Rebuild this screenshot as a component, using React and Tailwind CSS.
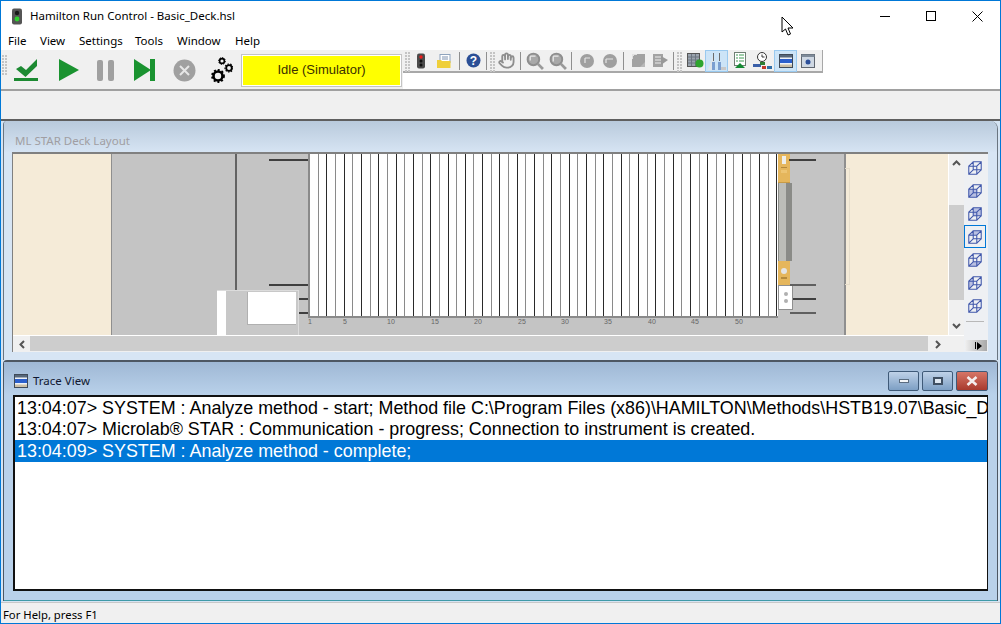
import React from "react";
import { Hand } from "lucide-react";

const MENU = [["File", "w-[32px]"], ["View", "w-[39px]"], ["Settings", "w-[56px]"], ["Tools", "w-[42px]"], ["Window", "w-[58px]"], ["Help", "w-[40px]"]];
const NUMBERS = [[1, 295], [5, 330], [10, 374], [15, 418], [20, 461], [25, 505], [30, 548], [35, 591], [40, 635], [45, 678], [50, 722]];
const CUBE_FACES = ["", "M2 8h9v9H2z", "M7 3h9v9H7z", "M2 8L7 3h9L11 8z", "M2 17l5-5h9l-5 5z", "M2 8L7 3v9L2 17z", ""];

function Grip({ className = "" }) {
  return (
    <div className={`grid grid-cols-2 gap-x-[1px] gap-y-[1px] content-start w-[5px] shrink-0 ${className}`}>
      {Array.from({ length: 14 }).map((_, i) => (
        <span key={i} className="w-[2px] h-[2px] bg-[#c4c4c4]" />
      ))}
    </div>
  );
}

function Sep({ className = "" }) {
  return <div className={`w-[1px] h-[18px] bg-[#8f8f8f] shrink-0 ${className}`} />;
}

function Slot({ w, active, children }) {
  return (
    <div className={`flex items-center justify-center h-[22px] shrink-0 ${w} ${active ? "bg-[#cce4f7] border border-[#99c9ef]" : ""}`}>
      {children}
    </div>
  );
}

function Gears() {
  return (
    <svg width="24" height="26" viewBox="0 0 24 26">
      <circle cx="9" cy="19" r="4.5" fill="none" stroke="#000" strokeWidth="2.6" />
      <circle cx="9" cy="19" r="6" fill="none" stroke="#000" strokeWidth="1.8" strokeDasharray="2 1.9" />
      <circle cx="20" cy="11" r="2.8" fill="none" stroke="#000" strokeWidth="1.8" />
      <circle cx="20" cy="11" r="4" fill="none" stroke="#000" strokeWidth="1.2" strokeDasharray="1.5 1.3" />
      <circle cx="13" cy="4" r="2.4" fill="none" stroke="#000" strokeWidth="1.6" />
      <circle cx="13" cy="4" r="3.4" fill="none" stroke="#000" strokeWidth="1" strokeDasharray="1.4 1.2" />
    </svg>
  );
}

function GrayMag({ flip }) {
  return (
    <svg width="18" height="18" viewBox="0 0 17 17">
      <circle cx="7" cy="7" r="5.5" fill="#a8a8a8" stroke="#8e8e8e" strokeWidth="1.8" />
      <path d="M11 11l5 5" stroke="#9a9a9a" strokeWidth="2.6" />
      <path d={flip ? "M4 4h5M4 4v5" : "M4 4h5M4 4v4"} stroke="#e8e8e8" strokeWidth="1.2" fill="none" />
    </svg>
  );
}

function GrayDisc({ flip }) {
  return (
    <svg width="14" height="14" viewBox="0 0 14 14">
      <circle cx="7" cy="7" r="7" fill="#9f9f9f" />
      <path d={flip ? "M3 5h7M3 5v4" : "M5 4h5M5 4v5"} stroke="#e6e6e6" strokeWidth="1.2" fill="none" />
    </svg>
  );
}

function Cube({ face }) {
  return (
    <svg width="16" height="18" viewBox="0 0 18 20" fill="none" stroke="#4057ab" strokeWidth="1.2">
      {face && <path d={face} fill="#b9c0e2" stroke="none" />}
      <path d="M2 8h9v9H2zM7 3h9v9H7zM2 8l5-5M11 8l5-5M2 17l5-5M11 17l5-5" />
    </svg>
  );
}

function TraceIcon() {
  return (
    <svg width="14" height="14" viewBox="0 0 14 14">
      <rect x="0.5" y="0.5" width="13" height="13" fill="#eef2f6" stroke="#3f4a58" />
      <rect x="1" y="1" width="12" height="2.5" fill="#56677a" />
      <rect x="1" y="5" width="12" height="4" fill="#2b5fcb" />
      <rect x="1" y="10.5" width="12" height="2.5" fill="#cbbfa6" />
    </svg>
  );
}

function ToolIcon({ kind }) {
  if (kind === "traffic")
    return (
      <svg width="10" height="16" viewBox="0 0 10 16">
        <rect x="1" y="0.5" width="8" height="15" rx="2" fill="#4b4b4b" />
        <circle cx="5" cy="4" r="1.7" fill="#ef1c1c" />
        <circle cx="5" cy="8" r="1.5" fill="#111" />
        <circle cx="5" cy="12" r="1.5" fill="#111" />
      </svg>
    );
  if (kind === "note")
    return (
      <svg width="14" height="14" viewBox="0 0 14 14">
        <rect x="3" y="0.5" width="10" height="8" fill="#fff" stroke="#8fa4bd" />
        <path d="M5 3h6M5 5h6" stroke="#7e93b0" />
        <path d="M0 6h4l1 1h8.5v7H0z" fill="#efcf3a" />
      </svg>
    );
  if (kind === "help")
    return (
      <svg width="15" height="15" viewBox="0 0 15 15">
        <circle cx="7.5" cy="7.5" r="7" fill="#2b4f96" />
        <text x="7.5" y="12" textAnchor="middle" fontSize="12" fontWeight="700" fill="#fff" fontFamily="Liberation Sans, sans-serif">?</text>
      </svg>
    );
  if (kind === "chip")
    return (
      <svg width="15" height="15" viewBox="0 0 15 15">
        <rect x="1" y="1" width="13" height="13" fill="#a2a2a2" />
        <path d="M1 1h5v1H3v1H2v3H1z" fill="#e0e0e0" />
        <path d="M9 14l5-5v5z" fill="#b8b8b8" />
      </svg>
    );
  if (kind === "sheet")
    return (
      <svg width="17" height="15" viewBox="0 0 17 15">
        <rect x="1" y="1" width="10" height="13" fill="#a2a2a2" />
        <path d="M3 4h6M3 7h6M3 10h6" stroke="#ececec" />
        <path d="M9 3l7 4-7 5z" fill="#999" />
      </svg>
    );
  if (kind === "grid")
    return (
      <svg width="17" height="15" viewBox="0 0 17 15">
        <rect x="0.5" y="0.5" width="12" height="13" fill="#9aa3ad" stroke="#555" />
        <path d="M1 4h11M1 7h11M1 10h11M4.5 1v12M8.5 1v12" stroke="#6b7480" />
        <circle cx="12.5" cy="10.5" r="4" fill="#2ea52e" />
      </svg>
    );
  if (kind === "tubes")
    return (
      <svg width="18" height="20" viewBox="0 0 18 20">
        <path d="M0 19L6 2v17z" fill="#dfe5ea" />
        <path d="M5 2h1v8H5zM11 2h1v8h-1z" fill="#6b6b6b" />
        <rect x="4" y="11" width="3" height="8" fill="#7b9fd0" />
        <rect x="10" y="11" width="3" height="8" fill="#7b9fd0" />
        <rect x="13" y="16" width="5" height="3" fill="#c8c8c8" />
      </svg>
    );
  if (kind === "list")
    return (
      <svg width="14" height="17" viewBox="0 0 14 17">
        <rect x="1.5" y="0.5" width="11" height="13" fill="#fff" stroke="#6f7f73" />
        <path d="M3 3h2M6 3h5M3 6h2M6 6h5M3 9h2M6 9h5" stroke="#3e9b54" />
        <path d="M7 11l5 5H2z" fill="#148a32" />
      </svg>
    );
  if (kind === "clock")
    return (
      <svg width="19" height="18" viewBox="0 0 19 18">
        <circle cx="9" cy="5" r="4.5" fill="#fff" stroke="#333" />
        <path d="M9 2.5V5h2.5" stroke="#333" fill="none" />
        <rect x="0" y="12" width="8" height="3" fill="#3a5fa8" />
        <rect x="7" y="10" width="5" height="3" fill="#2e7d32" />
        <rect x="9" y="14" width="4" height="3" fill="#c0392b" />
        <rect x="14" y="14" width="5" height="3" fill="#2f6fa8" />
      </svg>
    );
  if (kind === "bars") return <TraceIcon />;
  return (
    <svg width="14" height="14" viewBox="0 0 14 14">
      <rect x="0.5" y="0.5" width="13" height="13" fill="#cfd8e3" stroke="#5f6670" />
      <rect x="0.5" y="0.5" width="13" height="2.5" fill="#7f8b99" />
      <circle cx="7" cy="8" r="2.5" fill="#2c4f9a" />
    </svg>
  );
}

function WinButton({ red, children }) {
  return (
    <div
      className={`flex items-center justify-center h-[20px] rounded-[2px] border border-[#3f5a78] ${
        red ? "w-[32px] bg-linear-to-b from-[#d67566] to-[#a83a2e]" : "w-[31px] bg-linear-to-b from-[#bfd2e8] to-[#7d9fc4]"
      }`}
    >
      {children}
    </div>
  );
}

export default function App() {
  return (
    <div className="w-[1001px] h-[624px] overflow-hidden border border-[#0078d7] bg-white flex flex-col relative font-['Noto_Sans',sans-serif] text-[12px] text-black">
      {/* Title bar */}
      <div className="h-[30px] flex items-center shrink-0">
        <svg className="ml-[10px]" width="12" height="17" viewBox="0 0 12 17">
          <rect x="1" y="0.5" width="10" height="16" rx="2" fill="#555" />
          <circle cx="6" cy="5" r="2.2" fill="#1a1a1a" />
          <circle cx="6" cy="11" r="2.4" fill="#2fd12f" />
        </svg>
        <span className="ml-[7px] text-[11.5px] leading-none">Hamilton Run Control - Basic_Deck.hsl</span>
        <div className="ml-auto flex items-center">
          <div className="w-[46px] flex justify-center"><div className="w-[10px] h-[1px] bg-black" /></div>
          <div className="w-[46px] flex justify-center"><div className="w-[10px] h-[10px] border border-black" /></div>
          <div className="w-[46px] flex justify-center">
            <svg width="11" height="11" viewBox="0 0 11 11"><path d="M.5.5l10 10M10.5.5l-10 10" stroke="#000" /></svg>
          </div>
        </div>
      </div>

      {/* Menu */}
      <div className="h-[19px] flex items-center pl-[7px] shrink-0">
        {MENU.map(([label, w]) => (
          <span key={label} className={`${w} text-[11.5px] leading-none`}>{label}</span>
        ))}
      </div>

      {/* Toolbars */}
      <div className="h-[41px] flex shrink-0 border-b-2 border-[#a0a0a0]">
        <div className="w-[402px] bg-[#f0f0f0] flex items-center pl-[1px] pt-[1px]">
          <Grip className="h-[31px]" />
          <Slot w="ml-[5px] w-[28px]">
            <svg width="26" height="24" viewBox="0 0 26 24">
              <path d="M3 11l5-3 5 4L24 1v7L12.500 19z" fill="#1c8a32" />
              <rect x="1" y="20" width="24" height="3" fill="#1c8a32" />
            </svg>
          </Slot>
          <Slot w="ml-[19px] w-[20px]">
            <svg width="20" height="22" viewBox="0 0 20 22"><path d="M0 0l20 11L0 22z" fill="#1a9330" /></svg>
          </Slot>
          <Slot w="ml-[16px] w-[20px]">
            <div className="flex gap-[5px]">
              <div className="w-[6px] h-[21px] rounded-[2px] bg-[#a0a0a0]" />
              <div className="w-[6px] h-[21px] rounded-[2px] bg-[#a0a0a0]" />
            </div>
          </Slot>
          <Slot w="ml-[19px] w-[22px]">
            <svg width="22" height="22" viewBox="0 0 22 22"><path d="M0 0l17 11L0 22z" fill="#1a9330" /><rect x="16" y="0" width="5" height="22" fill="#1a9330" /></svg>
          </Slot>
          <Slot w="ml-[16px] w-[24px]">
            <svg width="23" height="23" viewBox="0 0 23 23">
              <circle cx="11.5" cy="11.5" r="11" fill="#a0a0a0" />
              <path d="M7 7l9 9M16 7l-9 9" stroke="#e6e6e6" strokeWidth="2" />
            </svg>
          </Slot>
          <Slot w="ml-[13px] w-[24px]"><Gears /></Slot>
          <div className="ml-[8px] w-[161px] h-[33px] shrink-0 border border-[#c4c4c4] bg-white p-[1px]">
            <div className="w-full h-full bg-[#ffff00] flex items-center justify-center font-['Liberation_Sans',sans-serif] text-[13px] text-[#3a3000]">
              Idle (Simulator)
            </div>
          </div>
        </div>

        <div className="h-[23px] w-[420px] bg-[#f0f0f0] border-b-2 border-r border-[#a8a8a8] flex items-center pl-[2px]">
          <Grip className="h-[18px]" />
          <Slot w="w-[22px]"><ToolIcon kind="traffic" /></Slot>
          <Slot w="ml-[1px] w-[22px]"><ToolIcon kind="note" /></Slot>
          <Sep className="ml-[4px]" />
          <Slot w="ml-[2px] w-[22px]"><ToolIcon kind="help" /></Slot>
          <Sep className="ml-[2px]" />
          <Grip className="ml-[3px] h-[18px]" />
          <Slot w="w-[22px]"><Hand size={17} color="#8e8e8e" strokeWidth={2.6} /></Slot>
          <Sep className="ml-[3px]" />
          <Slot w="ml-[2px] w-[23px]"><GrayMag /></Slot>
          <Slot w="w-[23px]"><GrayMag flip /></Slot>
          <Sep className="ml-[2px]" />
          <Slot w="ml-[3px] w-[23px]"><GrayDisc /></Slot>
          <Slot w="w-[23px]"><GrayDisc flip /></Slot>
          <Sep className="ml-[2px]" />
          <Slot w="ml-[3px] w-[22px]"><ToolIcon kind="chip" /></Slot>
          <Slot w="w-[22px]"><ToolIcon kind="sheet" /></Slot>
          <Sep className="ml-[2px]" />
          <Grip className="ml-[3px] h-[18px]" />
          <Slot w="ml-[4px] w-[19px]"><ToolIcon kind="grid" /></Slot>
          <Slot w="w-[23px]" active><ToolIcon kind="tubes" /></Slot>
          <Slot w="w-[23px]"><ToolIcon kind="list" /></Slot>
          <Slot w="w-[23px]"><ToolIcon kind="clock" /></Slot>
          <Slot w="w-[23px]" active><ToolIcon kind="bars" /></Slot>
          <Slot w="w-[22px]"><ToolIcon kind="eye" /></Slot>
        </div>
      </div>

      <div className="h-[28px] bg-[#f0f0f0] shrink-0 border-b-2 border-[#5f5f5f] box-content" />

      {/* MDI area */}
      <div className="flex-1 bg-[#d5e4f3] flex flex-col px-[2px] min-h-0">
        {/* Deck layout child */}
        <div className="h-[239px] shrink-0 border-x border-[#6a7580] rounded-tl-[4px] rounded-tr-[8px] flex flex-col bg-[#d7e5f4]">
          <div className="h-[31px] shrink-0 bg-linear-to-b from-[#b9cadc] to-[#d6e4f3] rounded-tl-[4px] rounded-tr-[8px] pl-[11px] flex items-center">
            <span className="text-[#a09ea2] text-[11.500px] leading-none pt-[8px]">ML STAR Deck Layout</span>
          </div>
          <div className="ml-[8px] mr-[9px] h-[200px] shrink-0 border-t-2 border-l border-[#808080] flex">
            <div className="w-[951px] shrink-0 flex flex-col">
              <div className="h-[181px] flex shrink-0">
                <div className="relative w-[935px] flex bg-[#c4c4c4] overflow-hidden">
                  <div className="w-[98px] bg-[#f5ebd8] border-r border-[#8f8f8f] box-content" />
                  <div className="flex-1" />
                  <div className="w-[104px] bg-[#f5ebd8] border-l-2 border-[#8f8f8f]" />

                  {/* Deck items */}
                  <div className="absolute left-[222px] top-0 w-[2px] h-[137px] bg-[#636363]" />
                  <div className="absolute left-[256px] top-[5px] w-[39px] h-[2px] bg-[#3f3f3f]" />
                  <div className="absolute left-[256px] top-[130px] w-[39px] h-[2px] bg-[#3f3f3f]" />
                  <div className="absolute left-[285px] top-[144px] w-[10px] h-[2px] bg-[#3f3f3f]" />
                  <div className="absolute left-[285px] top-[158px] w-[10px] h-[2px] bg-[#3f3f3f]" />

                  <div className="absolute left-[204px] top-[136px] w-[82px] h-[45px] flex border-t border-r border-[#dcdcdc]">
                    <div className="w-[9px] bg-white" />
                    <div className="flex-1 bg-[#c8c8c8] relative">
                      <div className="absolute left-[21px] top-[1px] w-[49px] h-[33px] bg-white border-l border-b border-[#b0b0b0]" />
                    </div>
                  </div>

                  <div className="absolute left-[295px] top-0 h-[164px] w-[470px] flex border-l-2 border-b-2 border-[#8a8a8a] bg-white">
                    {Array.from({ length: 54 }).map((_, i) => (
                      <div key={i} className={`w-[8.66px] h-full shrink-0 border-r ${i % 2 === 0 ? "border-[#8a8a8a]" : "border-[#2a2a2a]"}`} />
                    ))}
                  </div>
                  {NUMBERS.map(([n, x]) => (
                    <span key={n} className="absolute top-[164px] text-[7px] leading-none text-[#666] font-['Liberation_Sans',sans-serif]" style={{ left: x }}>
                      {n}
                    </span>
                  ))}

                  <div className="absolute left-[765px] top-0 w-[12px] h-[29px] bg-[#e5b65c] border-b border-[#c89b45] flex flex-col items-center">
                    <div className="mt-[2px] w-[4px] h-[8px] bg-[#eeeeea]" />
                    <div className="mt-[3px] w-[6px] h-[1px] bg-[#b58a3c]" />
                    <div className="mt-[2px] w-[6px] h-[3px] bg-[#edc473]" />
                  </div>
                  <div className="absolute left-[765px] top-[29px] w-[14px] h-[78px] flex">
                    <div className="w-[8px] bg-[#bcbdb8] border-l border-[#8a8b87]" />
                    <div className="w-[6px] bg-[#8a8b87]" />
                  </div>
                  <div className="absolute left-[765px] top-[107px] w-[12px] h-[24px] bg-[#e5b65c] flex flex-col items-center pt-[7px]">
                    <div className="w-[6px] h-[6px] rounded-full bg-[#e4e4e4]" />
                    <div className="mt-[3px] w-[6px] h-[2px] bg-[#b58a3c]" />
                  </div>
                  <div className="absolute left-[765px] top-[131px] w-[15px] h-[25px] bg-white border border-[#8f8f8f] flex flex-col items-center justify-center gap-[3px]">
                    <div className="w-[4px] h-[4px] rounded-full bg-[#b0b0b0]" />
                    <div className="w-[4px] h-[4px] rounded-full bg-[#b0b0b0]" />
                  </div>
                  <div className="absolute left-[776px] top-[5px] w-[27px] h-[2px] bg-[#3f3f3f]" />
                  <div className="absolute left-[777px] top-[130px] w-[26px] h-[2px] bg-[#5f5f5f]" />
                  <div className="absolute left-[780px] top-[144px] w-[23px] h-[2px] bg-[#3f3f3f]" />
                  <div className="absolute left-[777px] top-[158px] w-[26px] h-[2px] bg-[#5f5f5f]" />
                  <div className="absolute left-[832px] top-[14px] w-[5px] h-[117px] border border-l-0 border-[#e6ddcb]" />
                </div>

                {/* Vertical scrollbar */}
                <div className="w-[16px] bg-[#f0f0f0] flex flex-col items-center border-l border-white">
                  <svg className="mt-[6px]" width="9" height="6" viewBox="0 0 9 6"><path d="M1 5l3.5-3.5L8 5" fill="none" stroke="#555" strokeWidth="2" /></svg>
                  <div className="mt-[39px] w-full h-[95px] bg-[#cdcdcd]" />
                  <svg className="mt-[23px]" width="9" height="6" viewBox="0 0 9 6"><path d="M1 1l3.5 3.5L8 1" fill="none" stroke="#555" strokeWidth="2" /></svg>
                </div>
              </div>

              {/* Horizontal scrollbar */}
              <div className="h-[17px] shrink-0 border-t border-white flex items-stretch bg-[#f0f0f0]">
                <div className="w-[17px] flex items-center justify-center">
                  <svg width="6" height="9" viewBox="0 0 6 9"><path d="M5 1L1.500 4.500 5 8" fill="none" stroke="#555" strokeWidth="2" /></svg>
                </div>
                <div className="w-[898px] h-[15px] bg-[#cdcdcd]" />
                <div className="w-[20px] flex items-center justify-center">
                  <svg width="6" height="9" viewBox="0 0 6 9"><path d="M1 1l3.500 3.500L1 8" fill="none" stroke="#555" strokeWidth="2" /></svg>
                </div>
              </div>
            </div>

            {/* View toolbar */}
            <div className="flex-1 bg-[#eef0f3] flex flex-col items-start pt-[2px]">
              {CUBE_FACES.map((face, i) => (
                <div key={i} className={`w-[22px] h-[23px] shrink-0 flex items-center justify-center ${i === 3 ? "border border-[#0078d7]" : ""}`}>
                  <Cube face={face} />
                </div>
              ))}
              <div className="mt-[4px] ml-[2px] w-[18px] h-[1px] bg-[#b8b8b8]" />
              <div className="mt-[18px] ml-[1px] w-[22px] h-[11px] bg-linear-to-r from-[#f0f0f0] to-[#a8a8a8] flex items-center justify-end pr-[5px]">
                <div className="w-[1px] h-[7px] bg-black mr-[1px]" />
                <div className="w-0 h-0 border-y-[4px] border-y-transparent border-l-[5px] border-l-black" />
              </div>
            </div>
          </div>
          <div className="flex-1" />
        </div>

        {/* Trace view child */}
        <div className="h-[241px] shrink-0 border-x border-t-2 border-[#4d5763] rounded-tl-[4px] rounded-tr-[4px] flex flex-col bg-[#b9d1ea]">
          <div className="h-[33px] shrink-0 bg-linear-to-b from-[#9fb8d5] to-[#b9d1ea] flex items-center pl-[10px] pr-[9px] pt-[4px]">
            <TraceIcon />
            <span className="ml-[5px] text-[11.500px] leading-none text-[#101830]">Trace View</span>
            <div className="ml-auto flex gap-[3px]">
              <WinButton><div className="w-[10px] h-[4px] bg-[#f2f5f8] border border-[#5a6c80]" /></WinButton>
              <WinButton><div className="w-[10px] h-[8px] border-2 border-[#3f4f62] bg-[#dfe8f2]" /></WinButton>
              <WinButton red>
                <svg width="12" height="10" viewBox="0 0 12 10"><path d="M1.500 1l9 8M10.500 1l-9 8" stroke="#f4eeee" strokeWidth="2.600" /></svg>
              </WinButton>
            </div>
          </div>
          <div className="ml-[9px] mr-[9px] h-[196px] shrink-0 bg-white border-t-2 border-l-2 border-b-2 border-r border-[#111] font-['Liberation_Sans',sans-serif] text-[17.900px] overflow-hidden">
            <div className="h-[22px] leading-[22px] pl-[2px] whitespace-nowrap">13:04:07&gt; SYSTEM : Analyze method - start; Method file C:\Program Files (x86)\HAMILTON\Methods\HSTB19.07\Basic_Deck.hsl</div>
            <div className="h-[21px] leading-[21px] pl-[2px] whitespace-nowrap">13:04:07&gt; Microlab® STAR : Communication - progress; Connection to instrument is created.</div>
            <div className="h-[22px] leading-[22px] pl-[2px] whitespace-nowrap bg-[#0078d7] text-white">13:04:09&gt; SYSTEM : Analyze method - complete;</div>
          </div>
          <div className="flex-1 border-b border-[#3f9aa8]" />
        </div>
      </div>

      {/* Status bar */}
      <div className="h-[21px] shrink-0 bg-[#f0f0f0] border-t border-[#c8c8c8] flex items-center pl-[2px] pt-[3px]">
        <span className="text-[11.300px] leading-none">For Help, press F1</span>
      </div>

      {/* Mouse pointer in the capture */}
      <svg className="absolute left-[780px] top-[15px]" width="14" height="21" viewBox="0 0 14 21">
        <path d="M1 1v15l3.500-3 2.500 6 2.500-1-2.500-6H12z" fill="#fff" stroke="#000" />
      </svg>
    </div>
  );
}
